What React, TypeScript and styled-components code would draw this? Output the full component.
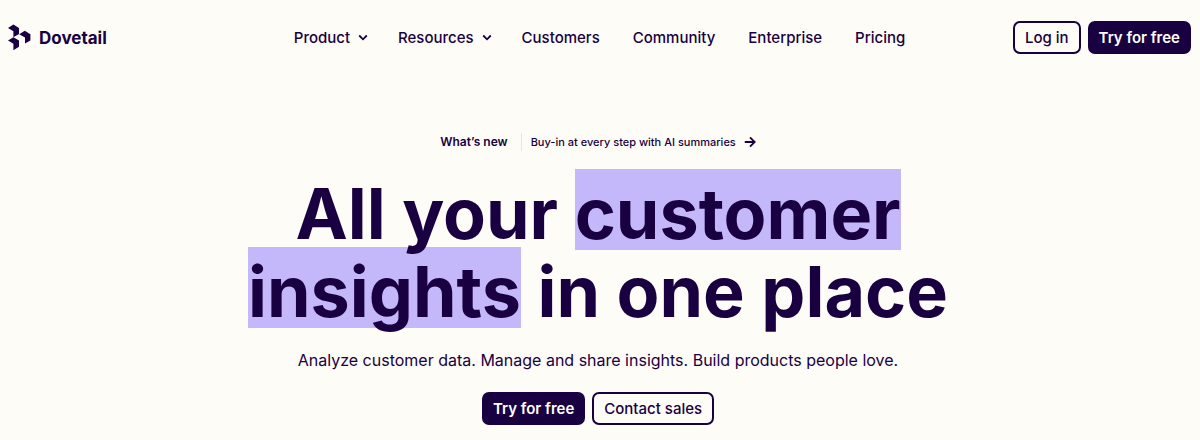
import React from "react";
import styled, { createGlobalStyle } from "styled-components";

const ink = "#190041";
const paper = "#fdfcf7";
const lilac = "#c5b8fa";

const GlobalStyle = createGlobalStyle`
  *, *::before, *::after { box-sizing: border-box; }
  body {
    margin: 0;
    background: ${paper};
    color: ${ink};
    font-family: Inter, "Liberation Sans", sans-serif;
  }
`;

const Header = styled.header`
  display: grid;
  grid-template-columns: 1fr auto 1fr;
  align-items: center;
  padding: 21px 9px 0 8px;
`;

const Brand = styled.a`
  display: inline-flex;
  align-items: center;
  justify-self: start;
  gap: 8px;
  color: ${ink};
  font-size: 17px;
  font-weight: 700;
  line-height: 24px;
  text-decoration: none;
`;

const Nav = styled.nav`
  display: flex;
  align-items: center;
  gap: 33px;
`;

const navItem = `
  color: ${ink};
  font-family: inherit;
  font-size: 15px;
  font-weight: 500;
  line-height: 24px;
  white-space: nowrap;
`;

const NavLink = styled.a`
  ${navItem}
  text-decoration: none;
`;

const NavMenuButton = styled.button`
  ${navItem}
  display: inline-flex;
  align-items: center;
  gap: 8px;
  margin-right: -3px;
  padding: 0;
  border: 0;
  background: none;
  cursor: pointer;
`;

const Actions = styled.div<{ $align: string }>`
  display: flex;
  justify-content: ${(p) => p.$align};
  gap: 7px;
`;

const Button = styled.button<{ $filled?: boolean }>`
  height: 33px;
  padding: 0 ${(p) => (p.$filled ? 9 : 10)}px;
  border: 2px solid ${ink};
  border-radius: 7px;
  background: ${(p) => (p.$filled ? ink : "transparent")};
  color: ${(p) => (p.$filled ? "#ffffff" : ink)};
  font-family: inherit;
  font-size: 15px;
  font-weight: ${(p) => (p.$filled ? 600 : 500)};
  line-height: 24px;
  white-space: nowrap;
  cursor: pointer;
`;

const Hero = styled.main`
  display: flex;
  flex-direction: column;
  align-items: center;
  padding: 79px 20px 16px 16px;
  text-align: center;
`;

const News = styled.div`
  display: flex;
  align-items: center;
  font-size: 12px;
  line-height: 18px;
`;

const NewsLabel = styled.span`
  padding-right: 13px;
  font-weight: 600;
`;

const NewsLink = styled.a`
  display: inline-flex;
  align-items: center;
  gap: 8px;
  padding-left: 9px;
  border-left: 1px solid #e6e4e6;
  color: ${ink};
  font-size: 11px;
  font-weight: 500;
  text-decoration: none;
`;

const Title = styled.h1`
  isolation: isolate;
  max-width: 740px;
  margin: 24px 0 0;
  font-size: 70px;
  font-weight: 700;
  line-height: 78px;
`;

const Highlight = styled.mark`
  position: relative;
  z-index: -1;
  padding-top: 2px;
  background: linear-gradient(${lilac}, ${lilac}) 0 0 / 100% 81px no-repeat;
  box-decoration-break: clone;
  -webkit-box-decoration-break: clone;
  color: inherit;
`;

const Lead = styled.p`
  margin: 17px 0 20px;
  font-size: 16px;
  line-height: 24px;
`;

const Logo = () => (
  <svg width="23" height="27" viewBox="0 0 23 27" fill={ink} aria-hidden="true">
    <path d="M0 4 5.4 0.6 11 4V10L5.4 13.2V7.2Z" />
    <path d="M11.2 10.2 16.8 6.8 22.4 10.2V16.4L17 19.6V13.4Z" />
    <path d="M0 16.6 5.4 13.2 11 16.6V22.8L5.4 26.2V19.8Z" />
  </svg>
);

const Chevron = () => (
  <svg width="10" height="8" viewBox="0 0 10 8" fill="none" stroke={ink} strokeWidth="1.8" aria-hidden="true">
    <path d="M1.2 1.5 5 5.3 8.8 1.5" />
  </svg>
);

const Arrow = () => (
  <svg width="12" height="12" viewBox="0 0 12 12" fill="none" stroke={ink} strokeWidth="1.8" aria-hidden="true">
    <path d="M0.8 6H10.5M6 1.3 10.7 6 6 10.7" />
  </svg>
);

const navEntries = [
  { label: "Product", menu: true },
  { label: "Resources", menu: true },
  { label: "Customers" },
  { label: "Community" },
  { label: "Enterprise" },
  { label: "Pricing" },
];

export default function App() {
  return (
    <>
      <GlobalStyle />
      <Header>
        <Brand href="#">
          <Logo />
          Dovetail
        </Brand>
        <Nav aria-label="Main">
          {navEntries.map(({ label, menu }) =>
            menu ? (
              <NavMenuButton key={label} type="button" aria-haspopup="true">
                {label}
                <Chevron />
              </NavMenuButton>
            ) : (
              <NavLink key={label} href="#">
                {label}
              </NavLink>
            )
          )}
        </Nav>
        <Actions $align="flex-end">
          <Button type="button">Log in</Button>
          <Button type="button" $filled>Try for free</Button>
        </Actions>
      </Header>
      <Hero>
        <News>
          <NewsLabel>What’s new</NewsLabel>
          <NewsLink href="#">
            Buy-in at every step with AI summaries
            <Arrow />
          </NewsLink>
        </News>
        <Title>
          All your <Highlight>customer insights</Highlight> in one place
        </Title>
        <Lead>Analyze customer data. Manage and share insights. Build products people love.</Lead>
        <Actions $align="center">
          <Button type="button" $filled>Try for free</Button>
          <Button type="button">Contact sales</Button>
        </Actions>
      </Hero>
    </>
  );
}
